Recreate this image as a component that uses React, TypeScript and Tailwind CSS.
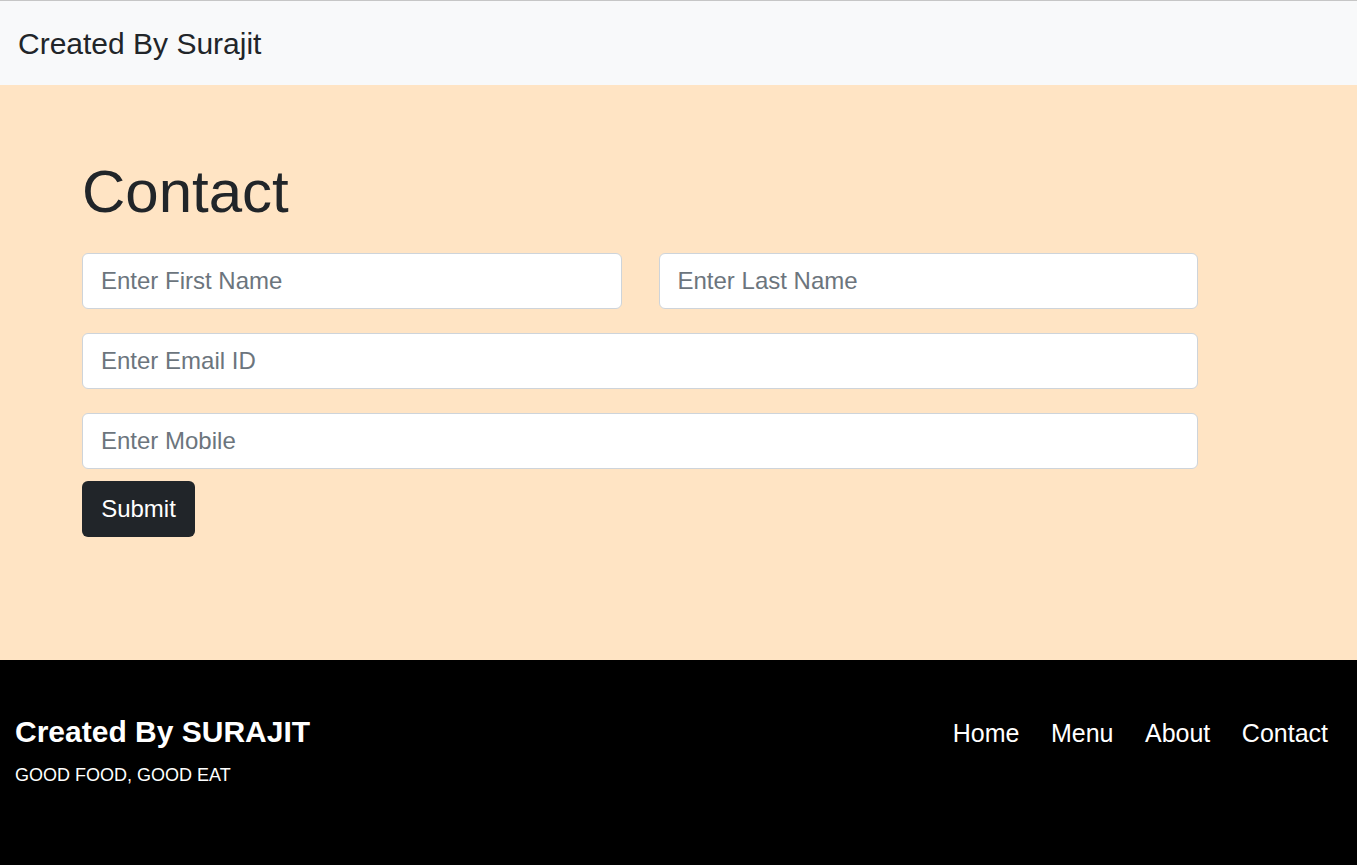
export default function App() {
    const font = { fontFamily: '"Liberation Sans", Arial, sans-serif' };

    return (
        <div className="min-h-[865px] flex flex-col" style={font}>
            <nav className="h-[85px] bg-[#f8f9fa] border-t border-[#c6c6c6] flex items-center px-[18px] pt-[1px]">
                <span className="text-[30px] leading-none text-[#212529]">Created By Surajit</span>
            </nav>

            <main className="bg-[#ffe4c4] h-[575px] pt-[77px] px-[82px]">
                <div className="w-[1116px]">
                    <h1 className="text-[60px] leading-none text-[#212529] mb-[31px]">Contact</h1>
                    <form className="flex flex-col" onSubmit={(e) => e.preventDefault()}>
                        <div className="flex gap-[37px]">
                            <input
                                type="text"
                                placeholder="Enter First Name"
                                className="flex-1 h-[56px] bg-white border border-[#ced4da] rounded-[6px] px-[18px] text-[24px] text-[#212529] placeholder:text-[#6c757d] outline-none"
                            />
                            <input
                                type="text"
                                placeholder="Enter Last Name"
                                className="flex-1 h-[56px] bg-white border border-[#ced4da] rounded-[6px] px-[18px] text-[24px] text-[#212529] placeholder:text-[#6c757d] outline-none"
                            />
                        </div>
                        <input
                            type="email"
                            placeholder="Enter Email ID"
                            className="mt-[24px] h-[56px] bg-white border border-[#ced4da] rounded-[6px] px-[18px] text-[24px] text-[#212529] placeholder:text-[#6c757d] outline-none"
                        />
                        <input
                            type="text"
                            placeholder="Enter Mobile"
                            className="mt-[24px] h-[56px] bg-white border border-[#ced4da] rounded-[6px] px-[18px] text-[24px] text-[#212529] placeholder:text-[#6c757d] outline-none"
                        />
                        <div className="mt-[12px]">
                            <button className="w-[113px] h-[56px] bg-[#212529] text-white text-[24px] rounded-[6px]">Submit</button>
                        </div>
                    </form>
                </div>
            </main>

            <footer className="bg-black flex-1 h-[205px] pt-[57px] pl-[15px] pr-[29px] flex justify-between items-baseline text-white">
                <div className="flex flex-col gap-[19px]">
                    <h2 className="text-[30px] leading-none font-bold">Created By SURAJIT</h2>
                    <p className="text-[18px] leading-none">GOOD FOOD, GOOD EAT</p>
                </div>
                <ul className="flex gap-[31.5px] text-[25px] leading-none">
                    <li>Home</li>
                    <li>Menu</li>
                    <li>About</li>
                    <li>Contact</li>
                </ul>
            </footer>
        </div>
    )
}
